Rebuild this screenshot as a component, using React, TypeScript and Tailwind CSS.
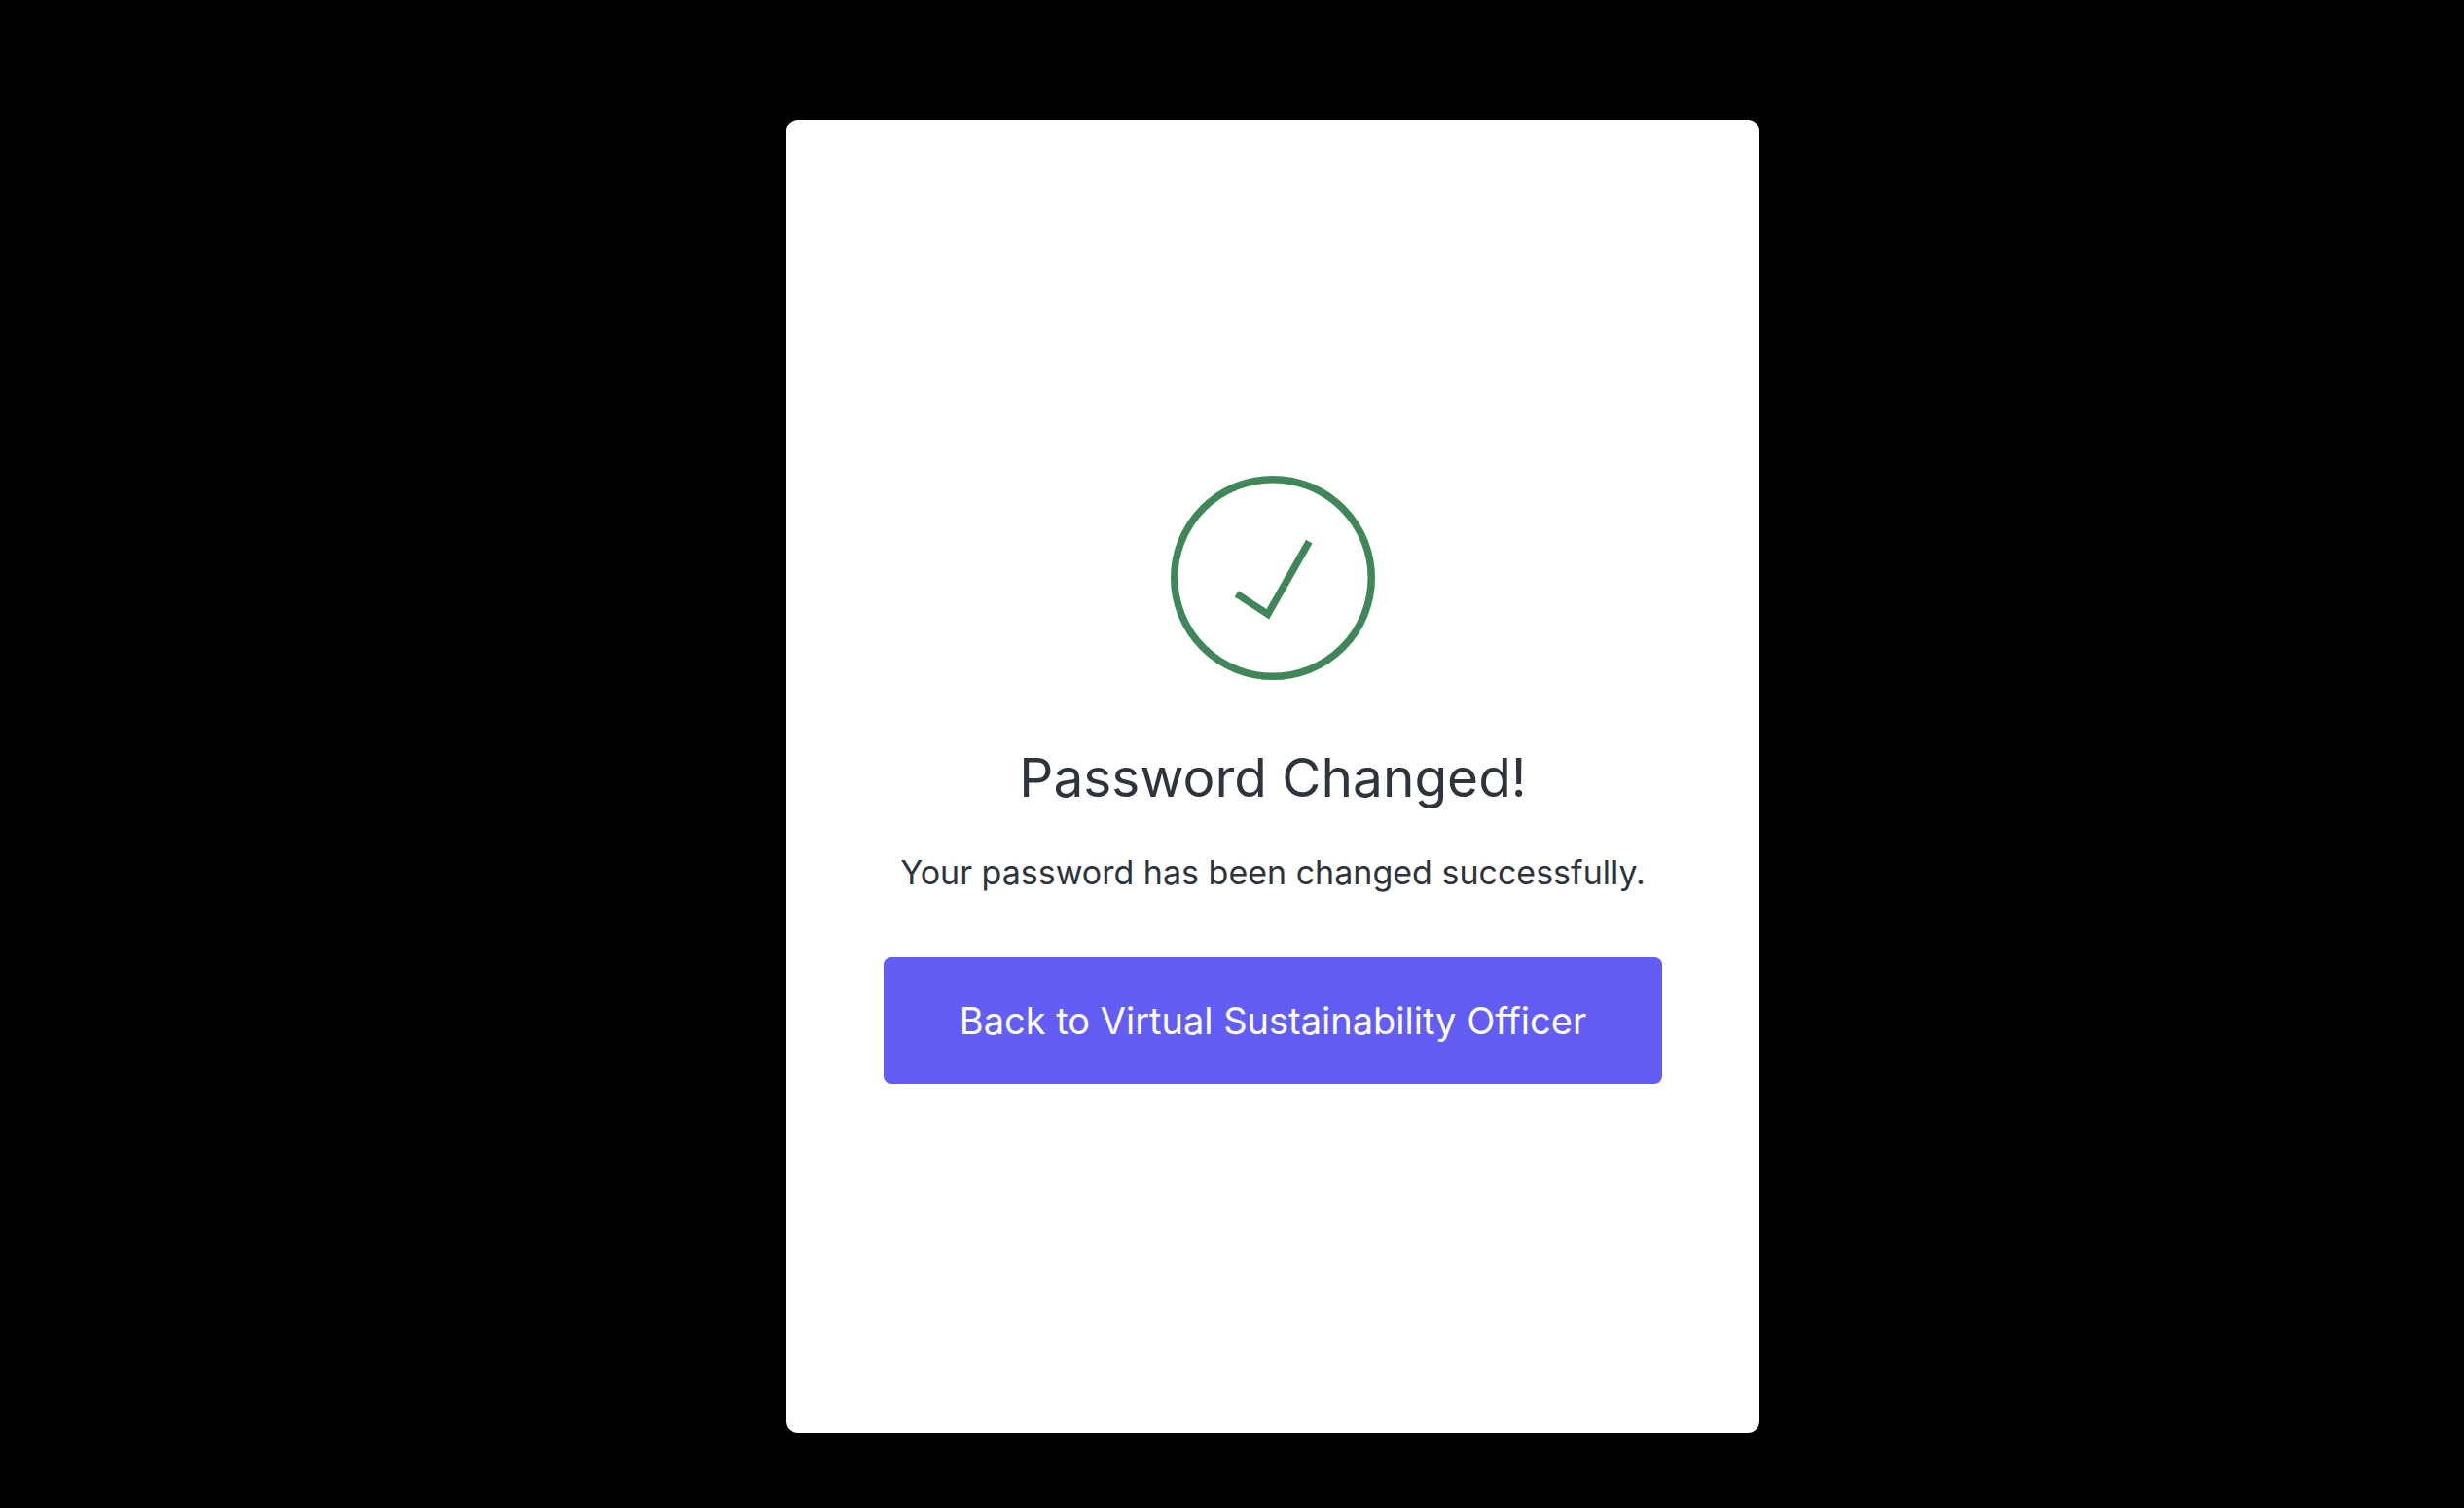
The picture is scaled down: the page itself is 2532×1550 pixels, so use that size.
export default function App() {
  return (
    <main className="flex min-h-screen justify-center bg-black pt-[123px] pb-[77px] pl-[84px] font-['Inter',sans-serif] text-[#2e343b]">
      <section className="flex w-full max-w-[1000px] flex-col items-center justify-center rounded-xl bg-white px-[100px] pt-[6px] text-center">
        <svg
          className="size-[210px]"
          viewBox="0 0 210 210"
          fill="none"
          stroke="#3f8758"
          strokeWidth="7.5"
          aria-hidden="true"
        >
          <circle cx="105" cy="105" r="101.25" />
          <path d="M67.7 121.3 99.8 142.3 142.3 67.7" />
        </svg>
        <h1 className="mt-16 text-[55px] leading-[72px]">Password Changed!</h1>
        <p className="mt-[34px] text-[34px] leading-[56px]">
          Your password has been changed successfully.
        </p>
        <button
          type="button"
          className="mt-[59px] w-full cursor-pointer rounded-lg bg-[#625df5] py-[35px] text-[38px] leading-[60px] text-white"
        >
          Back to Virtual Sustainability Officer
        </button>
      </section>
    </main>
  );
}
